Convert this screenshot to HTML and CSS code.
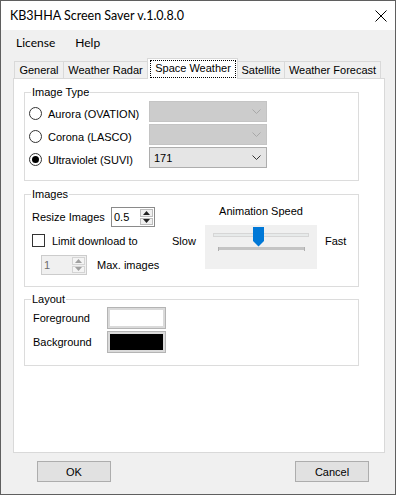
FILE: index.html
```html
<!DOCTYPE html>
<html>
<head>
<meta charset="utf-8">
<title>KB3HHA Screen Saver</title>
<link rel="stylesheet" href="styles.css">
</head>
<body>
<div class="window">
  <div class="titlebar">
    <span class="title">KB3HHA Screen Saver v.1.0.8.0</span>
    <svg class="close" width="12" height="12" viewBox="0 0 12 12"><path d="M0.5 0.5 L11.5 11.5 M11.5 0.5 L0.5 11.5" stroke="#000" stroke-width="1" fill="none"/></svg>
  </div>
  <div class="menubar">
    <span class="menu-item">License</span>
    <span class="menu-item">Help</span>
  </div>
  <div class="tabs">
    <div class="tabstrip">
      <div class="tab t1">General</div>
      <div class="tab t2">Weather Radar</div>
      <div class="tab t3 selected"><span class="focus">Space Weather</span></div>
      <div class="tab t4">Satellite</div>
      <div class="tab t5">Weather Forecast</div>
    </div>
    <div class="panel">
      <fieldset class="group g-type">
        <legend>Image Type</legend>
        <div class="type-body">
          <div class="opt-row">
            <label class="radio"><span class="radio-circle"></span>Aurora (OVATION)</label>
            <div class="combo disabled"><span class="combo-val"></span><svg class="chev" width="9" height="5" viewBox="0 0 9 5"><path d="M0.5 0.5 L4.5 4.5 L8.5 0.5" fill="none" stroke="#a8a8a8" stroke-width="1"/></svg></div>
          </div>
          <div class="opt-row">
            <label class="radio"><span class="radio-circle"></span>Corona (LASCO)</label>
            <div class="combo disabled"><span class="combo-val"></span><svg class="chev" width="9" height="5" viewBox="0 0 9 5"><path d="M0.5 0.5 L4.5 4.5 L8.5 0.5" fill="none" stroke="#a8a8a8" stroke-width="1"/></svg></div>
          </div>
          <div class="opt-row">
            <label class="radio"><span class="radio-circle checked"></span>Ultraviolet (SUVI)</label>
            <div class="combo"><span class="combo-val">171</span><svg class="chev" width="9" height="5" viewBox="0 0 9 5"><path d="M0.5 0.5 L4.5 4.5 L8.5 0.5" fill="none" stroke="#333" stroke-width="1"/></svg></div>
          </div>
        </div>
      </fieldset>

      <fieldset class="group g-images">
        <legend>Images</legend>
        <div class="images-body">
          <div class="images-left">
            <div class="resize-row">
              <span class="resize-label">Resize Images</span>
              <div class="spinner">
                <span class="spin-val">0.5</span>
                <div class="spin-btns">
                  <span class="spin-btn"><svg width="7" height="4" viewBox="0 0 7 4"><path d="M3.5 0 L7 4 L0 4 Z" fill="#222"/></svg></span>
                  <span class="spin-btn"><svg width="7" height="4" viewBox="0 0 7 4"><path d="M0 0 L7 0 L3.5 4 Z" fill="#222"/></svg></span>
                </div>
              </div>
            </div>
            <label class="check-row"><span class="checkbox"></span>Limit download to</label>
            <div class="max-row">
              <div class="spinner spinner-disabled">
                <span class="spin-val">1</span>
                <div class="spin-btns">
                  <span class="spin-btn"><svg width="7" height="4" viewBox="0 0 7 4"><path d="M3.5 0 L7 4 L0 4 Z" fill="#a0a0a0"/></svg></span>
                  <span class="spin-btn"><svg width="7" height="4" viewBox="0 0 7 4"><path d="M0 0 L7 0 L3.5 4 Z" fill="#a0a0a0"/></svg></span>
                </div>
              </div>
              <span class="max-label">Max. images</span>
            </div>
          </div>
          <div class="speed">
            <span class="speed-title">Animation Speed</span>
            <span class="speed-end">Slow</span>
            <div class="trackbar">
              <svg width="112" height="44" viewBox="0 0 112 44">
                <rect x="8.5" y="8.5" width="95" height="3" fill="#e7eaea" stroke="#d6d6d6" stroke-width="1"/>
                <rect x="13" y="22" width="87" height="3" fill="#c4c4c4"/>
                <rect x="13" y="22" width="1" height="4" fill="#b0b0b0"/>
                <rect x="99" y="22" width="1" height="4" fill="#b0b0b0"/>
                <path d="M48 2 H59 V16 L53.5 21.5 L48 16 Z" fill="#0078d7"/>
              </svg>
            </div>
            <span class="speed-end fast">Fast</span>
          </div>
        </div>
      </fieldset>

      <fieldset class="group g-layout">
        <legend>Layout</legend>
        <div class="layout-body">
          <div class="color-row">
            <span class="color-label">Foreground</span>
            <div class="color-box"><span class="swatch swatch-white"></span></div>
          </div>
          <div class="color-row">
            <span class="color-label">Background</span>
            <div class="color-box"><span class="swatch swatch-black"></span></div>
          </div>
        </div>
      </fieldset>
    </div>
  </div>
  <div class="buttons">
    <button class="btn">OK</button>
    <button class="btn">Cancel</button>
  </div>
</div>
</body>
</html>
```
FILE: styles.css
```css
* { box-sizing: border-box; }
html, body { margin: 0; padding: 0; }
body {
  width: 396px;
  height: 495px;
  background: #f0f0f0;
  font-family: "Liberation Sans", Arial, sans-serif;
  font-size: 11px;
  color: #000;
}
.window {
  width: 396px;
  height: 495px;
  border: 1px solid #5f5f5f;
  background: #f0f0f0;
  display: flex;
  flex-direction: column;
}
.titlebar {
  height: 29px;
  flex: none;
  background: #fff;
  display: flex;
  align-items: center;
  justify-content: space-between;
  padding: 0 8px 0 9px;
  font-family: Lato, "Liberation Sans", sans-serif;
  font-size: 12.5px;
}
.close { display: block; }
.menubar {
  height: 24px;
  flex: none;
  display: flex;
  align-items: center;
  gap: 20px;
  padding-left: 15px;
  font-family: Lato, "Liberation Sans", sans-serif;
  font-size: 12px;
}
.tabs {
  margin: 4px 10px 0 12px;
  flex: none;
}
.tabstrip {
  display: flex;
  align-items: flex-end;
  height: 20px;
  padding-left: 1px;
}
.tab {
  height: 17px;
  border: 1px solid #d9d9d9;
  border-bottom: none;
  background: #f0f0f0;
  margin-left: -1px;
  display: flex;
  align-items: center;
  justify-content: center;
  line-height: 13px;
  white-space: nowrap;
}
.t1 { width: 50px; margin-left: 0; }
.t2 { width: 85px; }
.t3 { width: 91px; }
.t4 { width: 48px; }
.t5 { width: 97px; }
.tab.selected {
  height: 21px;
  background: #fff;
  margin-bottom: -1px;
  position: relative;
  z-index: 1;
  padding: 1px 1px 1px 2px;
  align-items: stretch;
}
.focus {
  flex: 1;
  border: 1px dotted #000;
  display: flex;
  align-items: center;
  justify-content: center;
  padding-bottom: 2px;
}
.panel {
  height: 375px;
  border: 1px solid #d9d9d9;
  background: #fff;
  padding: 7px 0 0 10px;
}
.group {
  width: 335px;
  margin: 0;
  padding: 0;
  border: 1px solid #dcdcdc;
  min-width: 0;
}
.group legend {
  margin-left: 6px;
  padding: 0 1px;
  line-height: 13px;
}
.g-type { height: 95px; }
.g-images { height: 99px; margin-top: 7px; }
.g-layout { height: 73px; margin-top: 6px; }

/* Image type */
.type-body {
  padding: 2px 0 0 4px;
  display: flex;
  flex-direction: column;
  gap: 2px;
}
.opt-row {
  display: flex;
  align-items: center;
  height: 21px;
}
.radio {
  width: 120px;
  display: flex;
  align-items: center;
  gap: 6px;
  margin-top: 4px;
  white-space: nowrap;
}
.radio-circle {
  width: 13px;
  height: 13px;
  border-radius: 50%;
  border: 1px solid #333;
  background: #fff;
  display: flex;
  align-items: center;
  justify-content: center;
  flex: none;
}
.radio-circle.checked::after {
  content: "";
  width: 7px;
  height: 7px;
  border-radius: 50%;
  background: #000;
}
.combo {
  width: 118px;
  height: 21px;
  border: 1px solid #adadad;
  background: #e5e5e5;
  display: flex;
  align-items: center;
  justify-content: space-between;
  padding: 0 5px 0 4px;
}
.combo.disabled {
  background: #cccccc;
  border-color: #c4c4c4;
}
.chev { display: block; }

/* Images */
.images-body {
  display: flex;
  align-items: flex-start;
}
.images-left {
  width: 147px;
  padding: 6px 0 0 7px;
  display: flex;
  flex-direction: column;
}
.resize-row {
  display: flex;
  align-items: center;
  height: 20px;
}
.resize-label { width: 79px; white-space: nowrap; }
.spinner {
  width: 44px;
  height: 20px;
  border: 1px solid #8a8a8a;
  background: #fff;
  display: flex;
  align-items: stretch;
  padding: 1px;
}
.spin-val {
  flex: 1;
  display: flex;
  align-items: center;
  padding-left: 1px;
}
.spin-btns {
  width: 13px;
  display: flex;
  flex-direction: column;
  gap: 1px;
}
.spin-btn {
  flex: 1;
  background: #f0f0f0;
  border: 1px solid #bdbdbd;
  display: flex;
  align-items: center;
  justify-content: center;
}
.spin-btn svg { display: block; }
.spinner-disabled {
  width: 46px;
  border-color: #cccccc;
  background: #f0f0f0;
  color: #6d6d6d;
}
.spinner-disabled .spin-btn { border-color: #d4d4d4; background: #f4f4f4; }
.check-row {
  display: flex;
  align-items: center;
  gap: 7px;
  margin-top: 7px;
  height: 13px;
  white-space: nowrap;
}
.checkbox {
  width: 13px;
  height: 13px;
  border: 1px solid #333;
  background: #fff;
  flex: none;
}
.max-row {
  display: flex;
  align-items: center;
  margin-top: 8px;
  padding-left: 9px;
  white-space: nowrap;
}
.max-label { margin-left: 10px; }
.speed {
  padding-top: 4px;
  display: grid;
  grid-template-columns: 33px 112px auto;
  grid-template-rows: auto auto;
}
.speed-title {
  grid-column: 2;
  grid-row: 1;
  justify-self: center;
  line-height: 13px;
  margin-bottom: 7px;
  white-space: nowrap;
}
.speed-end {
  grid-row: 2;
  align-self: start;
  margin-top: 10px;
  line-height: 13px;
}
.speed-end.fast { margin-left: 8px; }
.trackbar {
  grid-row: 2;
  grid-column: 2;
  width: 112px;
  height: 44px;
  background: #f0f0f0;
}
.trackbar svg { display: block; }

/* Layout */
.layout-body {
  padding: 1px 0 0 8px;
  display: flex;
  flex-direction: column;
  gap: 2px;
}
.color-row {
  display: flex;
  align-items: center;
  height: 22px;
}
.color-label { width: 74px; }
.color-box {
  width: 59px;
  height: 22px;
  border: 1px solid #b4b4b4;
  padding: 2px;
  background: #dadada;
  display: flex;
}
.swatch { flex: 1; }
.swatch-white { background: #fff; }
.swatch-black { background: #000; }

/* Buttons */
.buttons {
  margin-top: 8px;
  display: flex;
  justify-content: space-between;
  padding: 0 26px 0 36px;
}
.btn {
  width: 74px;
  height: 21px;
  background: #e1e1e1;
  border: 1px solid #adadad;
  font-family: "Liberation Sans", Arial, sans-serif;
  font-size: 11px;
  color: #000;
  padding: 0;
}
```
